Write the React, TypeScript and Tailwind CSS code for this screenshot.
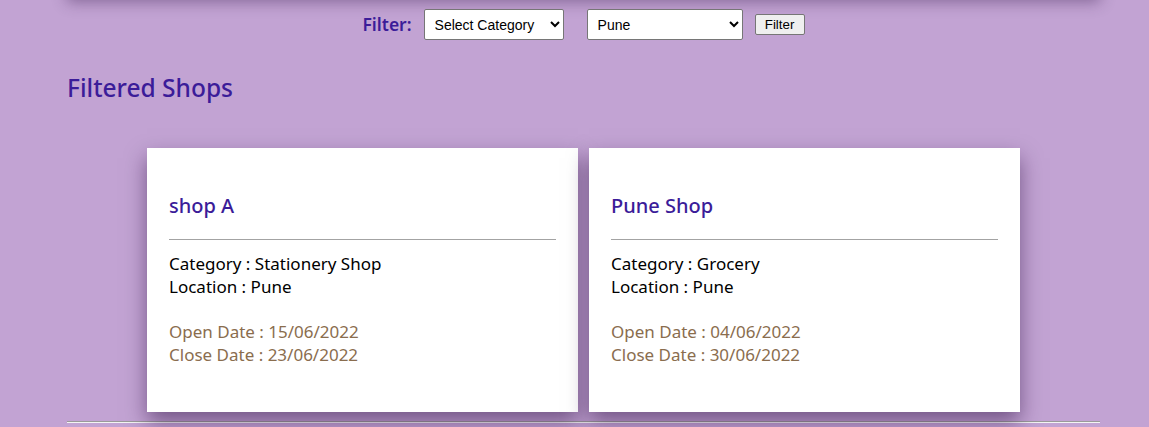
import React from 'react';

type Shop = {
  name: string;
  category: string;
  location: string;
  open: string;
  close: string;
};

const shops: Shop[] = [
  { name: 'shop A', category: 'Stationery Shop', location: 'Pune', open: '15/06/2022', close: '23/06/2022' },
  { name: 'Pune Shop', category: 'Grocery', location: 'Pune', open: '04/06/2022', close: '30/06/2022' },
];

const ShopCard: React.FC<{ shop: Shop }> = ({ shop }) => (
  <div className="w-[431px] h-[264px] bg-white px-[22px] pt-[45px] shadow-[0_10px_20px_rgba(40,10,60,0.5)]">
    <h3 className="text-[20px] leading-[26px] font-medium text-[#3b1c99]">{shop.name}</h3>
    <div className="mt-[20px] h-px bg-[#a3a3a3]" />
    <div className="mt-[12px] text-[17px] leading-[23px] text-black">
      <p>Category : {shop.category}</p>
      <p>Location : {shop.location}</p>
    </div>
    <div className="mt-[22px] text-[17px] leading-[23px] text-[#8a6d4e]">
      <p>Open Date : {shop.open}</p>
      <p>Close Date : {shop.close}</p>
    </div>
  </div>
);

const App: React.FC = () => {
  return (
    <div className="min-h-screen w-full overflow-hidden bg-[#c2a3d3] font-['Noto_Sans',sans-serif]">
      <div className="pl-[67px] pr-[49px]">
        {/* navbar sits just above the viewport, only its shadow shows */}
        <div className="-mt-[60px] h-[60px] bg-[#c2a3d3] shadow-[0_2px_14px_rgba(60,30,80,0.45)]" />

        <div className="mt-[9px] flex items-center justify-center">
          <span className="mr-[12px] text-[17.5px] font-semibold text-[#3b1c99]">Filter:</span>
          <select className="h-[31px] w-[140px] rounded-[2px] border border-[#767676] bg-white pl-[6px] text-[14px] text-black font-['Liberation_Sans',sans-serif]">
            <option>Select Category</option>
          </select>
          <select className="ml-[23px] h-[31px] w-[156px] rounded-[2px] border border-[#767676] bg-white pl-[6px] text-[14px] text-black font-['Liberation_Sans',sans-serif]">
            <option>Pune</option>
          </select>
          <button className="ml-[12px] h-[21px] w-[50px] rounded-[2px] border border-[#767676] bg-[#efefef] text-[13.33px] leading-none text-black font-['Liberation_Sans',sans-serif]">
            Filter
          </button>
        </div>

        <h2 className="mt-[31px] text-[24.5px] leading-[34px] font-medium text-[#3b1c99]">Filtered Shops</h2>

        <div className="mt-[43px] flex justify-center gap-[11px]">
          {shops.map((s) => (
            <ShopCard key={s.name} shop={s} />
          ))}
        </div>

        <hr className="mt-[9px] border-t border-t-[#9a9a9a] border-b border-b-[#f4f4f4]" />
      </div>
    </div>
  );
};

export default App;
